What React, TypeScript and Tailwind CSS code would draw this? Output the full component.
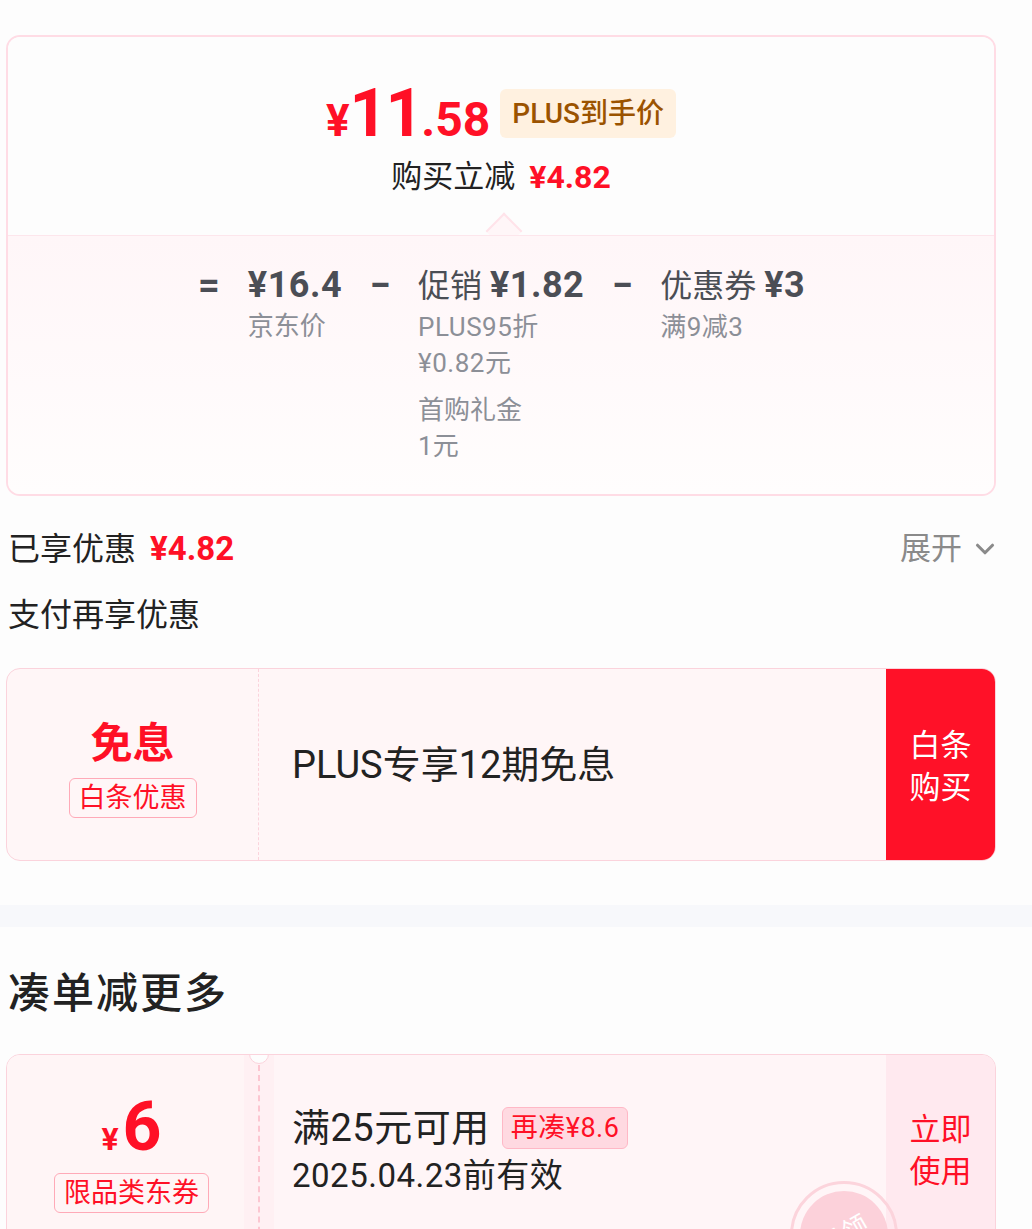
import { ChevronDown } from 'lucide-react';

const font = { fontFamily: 'Roboto, "Noto Sans CJK SC", sans-serif' };

function Formula() {
  return (
    <div className="flex justify-center gap-[27px] pt-[26px] pb-[30px]">
      <div className="w-[24px] text-center text-[38px] font-bold leading-[46px] text-[#4b4e55]">=</div>
      <div className="flex flex-col">
        <div className="text-[36px] font-bold leading-[46px] tracking-[0.5px] text-[#4b4e55]">¥16.4</div>
        <div className="text-[26px] leading-[36px] text-[#8c8f97]">京东价</div>
      </div>
      <div className="w-[22px] text-center text-[38px] font-bold leading-[46px] text-[#4b4e55]">−</div>
      <div className="flex flex-col">
        <div className="text-[32px] leading-[46px] text-[#4b4e55]">
          促销 <span className="text-[36px] font-bold tracking-[0.5px]">¥1.82</span>
        </div>
        <div className="text-[26px] leading-[36px] tracking-[0.5px] text-[#8c8f97]">PLUS95折</div>
        <div className="text-[26px] leading-[36px] tracking-[0.5px] text-[#8c8f97]">¥0.82元</div>
        <div className="mt-[11px] text-[26px] leading-[36px] text-[#8c8f97]">首购礼金</div>
        <div className="text-[26px] leading-[36px] text-[#8c8f97]">1元</div>
      </div>
      <div className="w-[22px] text-center text-[38px] font-bold leading-[46px] text-[#4b4e55]">−</div>
      <div className="flex flex-col">
        <div className="text-[32px] leading-[46px] text-[#4b4e55]">
          优惠券 <span className="text-[36px] font-bold tracking-[0.5px]">¥3</span>
        </div>
        <div className="text-[26px] leading-[36px] tracking-[0.5px] text-[#8c8f97]">满9减3</div>
      </div>
    </div>
  );
}

export default function App() {
  return (
    <div className="h-[1229px] w-[1032px] overflow-hidden bg-[#fdfdfd] text-[#222]" style={font}>
      <div className="ml-[6px] w-[990px]">
        {/* 到手价卡片 */}
        <div className="mt-[35px] overflow-hidden rounded-[14px] border-2 border-[#ffdce5]">
          <div className="relative flex h-[198px] flex-col items-center bg-[#fdfdfd] pt-[42px]">
            <div className="flex items-center gap-[10px]">
              <div className="flex items-baseline font-bold text-[#ff1026]">
                <span className="text-[44px]">¥</span>
                <span className="text-[66px] leading-[70px] tracking-[-2px]">11</span>
                <span className="text-[48px]">.58</span>
              </div>
              <div className="mt-[-8px] rounded-[6px] bg-[#fff1e0] px-[12px] text-[28px] font-medium leading-[49px] text-[#9b5300]">
                PLUS到手价
              </div>
            </div>
            <div className="mt-[0px] flex items-center gap-[14px] text-[31px] leading-[42px]">
              <span>购买立减</span>
              <span className="text-[32px] font-bold text-[#ff1026]">¥4.82</span>
            </div>
            <div className="absolute bottom-[-9px] left-[483px] h-[26px] w-[26px] rotate-45 border-l-2 border-t-2 border-[#ffe3ea] bg-[#fff6f8]" />
          </div>
          <div className="relative border-t border-[#fde6ec] bg-gradient-to-b from-[#fff6f8] to-[#fffdfd]">
            <Formula />
          </div>
        </div>

        {/* 已享优惠 */}
        <div className="mt-[31px] flex items-center justify-between pl-[2px] text-[32px] leading-[44px]">
          <div className="flex items-center gap-[14px]">
            <span>已享优惠</span>
            <span className="text-[33px] font-bold text-[#ff1026]">¥4.82</span>
          </div>
          <div className="flex items-center gap-[8px] text-[#8a8a8a]">
            <span className="text-[31px]">展开</span>
            <ChevronDown size={30} strokeWidth={2.5} className="mr-[-4px]" />
          </div>
        </div>
        <div className="mt-[22px] pl-[2px] text-[32px] leading-[44px]">支付再享优惠</div>

        {/* 白条 */}
        <div className="mt-[31px] flex h-[193px] overflow-hidden rounded-[14px] border border-[#fbd3dc] bg-[#fff6f7]">
          <div className="flex w-[252px] flex-col items-center justify-center border-r border-dashed border-[#fbd3dc] pt-[6px]">
            <div className="text-[42px] font-bold leading-[52px] text-[#ff1026]">免息</div>
            <div className="mt-[8px] rounded-[6px] border border-[#ffaab8] px-[9px] text-[27px] leading-[38px] text-[#ff1026]">
              白条优惠
            </div>
          </div>
          <div className="flex flex-1 items-center pl-[33px] text-[38px] leading-[48px]">PLUS专享12期免息</div>
          <div className="flex w-[109px] items-center justify-center bg-[#ff1128] pt-[4px] text-center text-[31px] leading-[42px] text-white">
            白条
            <br />
            购买
          </div>
        </div>
      </div>

      <div className="mt-[44px] h-[22px] bg-[#f7f8fb]" />

      <div className="ml-[6px] w-[990px]">
        <div className="mt-[39px] pl-[2px] text-[42px] font-medium leading-[56px] tracking-[2px]">凑单减更多</div>

        {/* 优惠券 */}
        <div className="relative mt-[32px] flex h-[200px] overflow-hidden rounded-[14px] border border-[#fbd3dc] bg-[#fff5f7]">
          <div className="flex w-[237px] flex-col items-center bg-[#fff5f6] pl-[12px] pt-[44px]">
            <div className="flex items-baseline font-bold leading-[56px] text-[#ff1026]">
              <span className="mr-[4px] text-[32px]">¥</span>
              <span className="text-[68px]">6</span>
            </div>
            <div className="mt-[6px] rounded-[6px] border border-[#ffaab8] px-[9px] text-[27px] leading-[38px] text-[#ff1026]">
              限品类东券
            </div>
          </div>
          <div className="relative flex w-[30px] justify-center bg-[#fff0f3]">
            <div className="mt-[10px] h-full border-l-2 border-dashed border-[#fcc6d1]" />
            <div className="absolute top-[-11px] left-[5px] h-[20px] w-[20px] rounded-full border border-[#fbd3dc] bg-[#fdfdfd]" />
          </div>
          <div className="flex flex-1 flex-col pl-[18px] pt-[49px]">
            <div className="flex items-center gap-[12px]">
              <span className="text-[38px] leading-[48px] tracking-[0.5px]">满25元可用</span>
              <span className="rounded-[6px] border border-[#ffb8c6] bg-[#ffd9e1] px-[8px] text-[27px] leading-[40px] tracking-[0.5px] text-[#ff1026]">
                再凑¥8.6
              </span>
            </div>
            <div className="mt-[2px] text-[33px] leading-[44px] tracking-[0.5px]">2025.04.23前有效</div>
          </div>
          <div className="flex w-[109px] flex-col items-center bg-[#ffe9ef] pt-[54px] text-center text-[31px] leading-[42px] text-[#ff1026]">
            立即
            <br />
            使用
          </div>
          <div className="absolute left-[783px] top-[126px] flex h-[108px] w-[108px] items-center justify-center rounded-full border-[3px] border-[#fcd4dc]">
            <div className="flex h-[88px] w-[88px] items-center justify-center rounded-full bg-[#fcd1da]">
              <span className="-rotate-[30deg] text-[26px] text-white">已领</span>
            </div>
          </div>
        </div>
      </div>
    </div>
  );
}
